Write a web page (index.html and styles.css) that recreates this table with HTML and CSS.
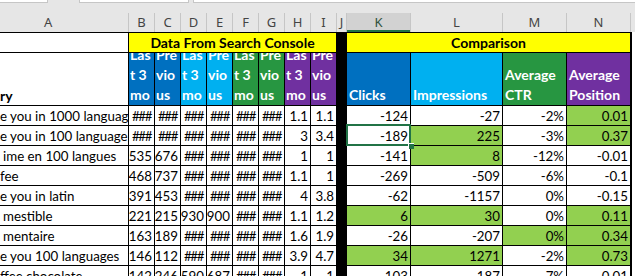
FILE: index.html
```html
<!DOCTYPE html>
<html>
<head>
<meta charset="utf-8">
<link rel="stylesheet" href="styles.css">
</head>
<body>
<div class="top"><span class="box b1"></span><span class="box b2"></span><span class="box b3"></span></div>
<div class="colhead">
  <div class="ch ch-a">A</div><div class="ch">B</div><div class="ch">C</div><div class="ch">D</div><div class="ch">E</div><div class="ch">F</div><div class="ch">G</div><div class="ch">H</div><div class="ch">I</div><div class="ch">J</div><div class="ch sel">K</div><div class="ch">L</div><div class="ch">M</div><div class="ch">N</div><div class="ch"></div>
</div>
<div class="sheet">
  <div class="c a"></div>
  <div class="c yellow span8">Data From Search Console</div>
  <div class="c j"></div>
  <div class="c yellow span4">Comparison</div>

  <div class="c a title">ry</div>
  <div class="hd blue"><span>Las<br>t 3<br>mo</span></div>
  <div class="hd blue"><span>Pre<br>vio<br>us</span></div>
  <div class="hd lblue"><span>Las<br>t 3<br>mo</span></div>
  <div class="hd lblue"><span>Pre<br>vio<br>us</span></div>
  <div class="hd green"><span>Las<br>t 3<br>mo</span></div>
  <div class="hd green"><span>Pre<br>vio<br>us</span></div>
  <div class="hd purple"><span>Las<br>t 3<br>mo</span></div>
  <div class="hd purple"><span>Pre<br>vio<br>us</span></div>
  <div class="c j"></div>
  <div class="hd blue wide"><span>Clicks</span></div>
  <div class="hd lblue wide"><span>Impressions</span></div>
  <div class="hd green wide"><span>Average<br>CTR</span></div>
  <div class="hd purple wide"><span>Average<br>Position</span></div>

  <div class="c a">e you in 1000 languag</div>
  <div class="c h">###</div><div class="c h">###</div><div class="c h">###</div><div class="c h">###</div><div class="c h">###</div><div class="c h">###</div>
  <div class="c">1.1</div><div class="c">1.1</div>
  <div class="c j"></div>
  <div class="c">-124</div><div class="c">-27</div><div class="c">-2%</div><div class="c g">0.01</div>

  <div class="c a">e you in 100 language</div>
  <div class="c h">###</div><div class="c h">###</div><div class="c h">###</div><div class="c h">###</div><div class="c h">###</div><div class="c h">###</div>
  <div class="c">3</div><div class="c">3.4</div>
  <div class="c j"></div>
  <div class="c active">-189</div><div class="c g">225</div><div class="c">-3%</div><div class="c g">0.37</div>

  <div class="c a ind">ime en 100 langues</div>
  <div class="c">535</div><div class="c">676</div><div class="c h">###</div><div class="c h">###</div><div class="c h">###</div><div class="c h">###</div>
  <div class="c">1</div><div class="c">1</div>
  <div class="c j"></div>
  <div class="c">-141</div><div class="c g">8</div><div class="c">-12%</div><div class="c">-0.01</div>

  <div class="c a">fee</div>
  <div class="c">468</div><div class="c">737</div><div class="c h">###</div><div class="c h">###</div><div class="c h">###</div><div class="c h">###</div>
  <div class="c">1.1</div><div class="c">1</div>
  <div class="c j"></div>
  <div class="c">-269</div><div class="c">-509</div><div class="c">-6%</div><div class="c">-0.1</div>

  <div class="c a">e you in latin</div>
  <div class="c">391</div><div class="c">453</div><div class="c h">###</div><div class="c h">###</div><div class="c h">###</div><div class="c h">###</div>
  <div class="c">4</div><div class="c">3.8</div>
  <div class="c j"></div>
  <div class="c">-62</div><div class="c">-1157</div><div class="c">0%</div><div class="c">-0.15</div>

  <div class="c a ind">mestible</div>
  <div class="c">221</div><div class="c">215</div><div class="c">930</div><div class="c">900</div><div class="c h">###</div><div class="c h">###</div>
  <div class="c">1.1</div><div class="c">1.2</div>
  <div class="c j"></div>
  <div class="c g">6</div><div class="c g">30</div><div class="c">0%</div><div class="c g">0.11</div>

  <div class="c a ind">mentaire</div>
  <div class="c">163</div><div class="c">189</div><div class="c h">###</div><div class="c h">###</div><div class="c h">###</div><div class="c h">###</div>
  <div class="c">1.6</div><div class="c">1.9</div>
  <div class="c j"></div>
  <div class="c">-26</div><div class="c">-207</div><div class="c g">0%</div><div class="c g">0.34</div>

  <div class="c a">e you 100 languages</div>
  <div class="c">146</div><div class="c">112</div><div class="c h">###</div><div class="c h">###</div><div class="c h">###</div><div class="c h">###</div>
  <div class="c">3.9</div><div class="c">4.7</div>
  <div class="c j"></div>
  <div class="c g">34</div><div class="c g">1271</div><div class="c">-2%</div><div class="c g">0.73</div>

  <div class="c a">ffee chocolate</div>
  <div class="c">142</div><div class="c">246</div><div class="c">590</div><div class="c">687</div><div class="c h">###</div><div class="c h">###</div>
  <div class="c">1</div><div class="c">1</div>
  <div class="c j"></div>
  <div class="c">-103</div><div class="c">-187</div><div class="c">-7%</div><div class="c">0.01</div>
</div>
</body>
</html>
```
FILE: styles.css
```css
html, body {
  margin: 0;
  padding: 0;
}
body {
  width: 635px;
  height: 276px;
  overflow: hidden;
  background: #ffffff;
  font-family: Lato, "Liberation Sans", sans-serif;
}
.top {
  height: 13px;
  background: #e6e6e6;
  display: flex;
  align-items: flex-start;
}
.box {
  height: 2px;
  background: #ffffff;
  border: 1px solid #c6c6c6;
  border-top: 0;
}
.b1 {
  width: 47px;
  border-left: 0;
}
.b2 {
  margin-left: 31px;
  width: 108px;
}
.b3 {
  margin-left: 4px;
  flex: 1;
  border-right: 0;
}
.colhead {
  display: grid;
  grid-template-columns: 128px repeat(8, 25px) 9px 63px 91px 63px 63px 1fr;
  column-gap: 1px;
  height: 19px;
  background: #c6c6c6;
}
.ch {
  background: #e6e6e6;
  color: #444444;
  font-family: "Noto Sans", "Open Sans", sans-serif;
  font-size: 13px;
  line-height: 19px;
  text-align: center;
}
.ch-a {
  text-align: left;
  padding-left: 44px;
}
.ch.sel {
  background: #d2d2d2;
  box-shadow: inset 0 -2px 0 #217346;
  color: #30513d;
}
.sheet {
  display: grid;
  grid-template-columns: 128px repeat(8, 25px) 9px 63px 91px 63px 63px;
  grid-template-rows: 19px 52px repeat(9, 19px);
  gap: 1px;
  padding: 1px 2px 0 0;
  background: #000000;
  width: max-content;
}
.c {
  background: #ffffff;
  color: #000000;
  font-size: 13.3px;
  line-height: 17px;
  display: flex;
  align-items: flex-end;
  justify-content: flex-end;
  padding-right: 2px;
  overflow: hidden;
  white-space: nowrap;
}
.c.h {
  letter-spacing: -1.4px;
  padding-right: 3px;
}
.c.a {
  justify-content: flex-start;
  padding-right: 0;
}
.c.a.ind {
  padding-left: 3px;
}
.c.title {
  font-weight: 700;
  font-size: 14px;
  line-height: 18px;
}
.c.j {
  background: #000000;
}
.c.g {
  background: #92d050;
}
.yellow {
  background: #ffff00;
  font-size: 14px;
  font-weight: 700;
  justify-content: center;
  align-items: center;
  padding-right: 0;
}
.span8 {
  grid-column: span 8;
}
.span4 {
  grid-column: span 4;
}
.hd {
  display: flex;
  align-items: flex-end;
  overflow: hidden;
  color: #ffffff;
  font-size: 14px;
  font-weight: 700;
  line-height: 20px;
  padding-left: 1px;
  white-space: nowrap;
}
.hd.wide {
  padding-left: 2px;
}
.blue {
  background: #0070c0;
}
.lblue {
  background: #00b0f0;
}
.green {
  background: #279641;
}
.purple {
  background: #7030a0;
}
.c.active {
  position: relative;
  overflow: visible;
}
.c.active::after {
  content: "";
  position: absolute;
  left: -1px;
  right: -1px;
  top: -2px;
  bottom: -1px;
  border: 2px solid #217346;
}
.c.active::before {
  content: "";
  position: absolute;
  right: -4px;
  bottom: -4px;
  width: 5px;
  height: 5px;
  background: #217346;
  border-left: 1px solid #ffffff;
  border-top: 1px solid #ffffff;
  z-index: 2;
}
```
